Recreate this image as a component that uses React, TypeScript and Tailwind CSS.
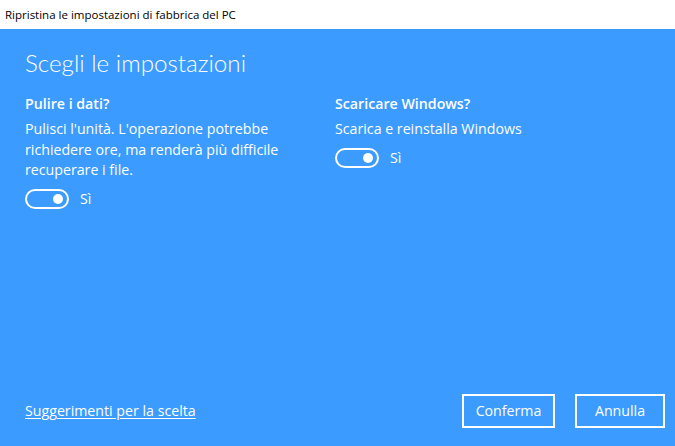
import React from "react";

function Toggle() {
  return (
    <div className="flex items-center gap-[11px]">
      <div className="w-[44px] h-[20px] rounded-full border-2 border-white flex items-center justify-end pr-[4px]">
        <div className="w-[10px] h-[10px] rounded-full bg-white" />
      </div>
      <span className="text-[14.2px] leading-[20px]">Sì</span>
    </div>
  );
}

export default function App() {
  return (
    <div
      className="w-[675px] h-[446px] flex flex-col overflow-hidden"
      style={{ fontFamily: '"Open Sans", "Noto Sans", sans-serif' }}
    >
      <div className="h-[29px] bg-white flex items-center px-[5px] text-[11.5px] text-black">
        Ripristina le impostazioni di fabbrica del PC
      </div>
      <div className="flex-1 bg-[#3b9bfe] text-white flex flex-col px-[25px] pt-[19px] pb-[18px]">
        <h1
          className="text-[24.2px] font-light leading-[30px]"
          style={{ fontFamily: 'Lato, "Open Sans", sans-serif' }}
        >
          Scegli le impostazioni
        </h1>
        <div className="flex mt-[16px]">
          <div className="w-[310px] flex flex-col">
            <div className="text-[14.2px] font-semibold leading-[20px]">Pulire i dati?</div>
            <p className="text-[14.2px] leading-[20.5px] mt-[5px] w-[260px]">
              Pulisci l'unità. L'operazione potrebbe richiedere ore, ma renderà più difficile recuperare i file.
            </p>
            <div className="mt-[8px]">
              <Toggle />
            </div>
          </div>
          <div className="flex flex-col">
            <div className="text-[14.2px] font-semibold leading-[20px]">Scaricare Windows?</div>
            <p className="text-[14.2px] leading-[20.5px] mt-[5px]">Scarica e reinstalla Windows</p>
            <div className="mt-[8px]">
              <Toggle />
            </div>
          </div>
        </div>
        <div className="mt-auto flex items-center justify-between mr-[-15px]">
          <a className="text-[14.2px] underline underline-offset-2">Suggerimenti per la scelta</a>
          <div className="flex gap-[20px]">
            <button className="w-[93px] h-[34px] border-2 border-white text-[14.2px]">Conferma</button>
            <button className="w-[90px] h-[34px] border-2 border-white text-[14.2px]">Annulla</button>
          </div>
        </div>
      </div>
    </div>
  );
}
